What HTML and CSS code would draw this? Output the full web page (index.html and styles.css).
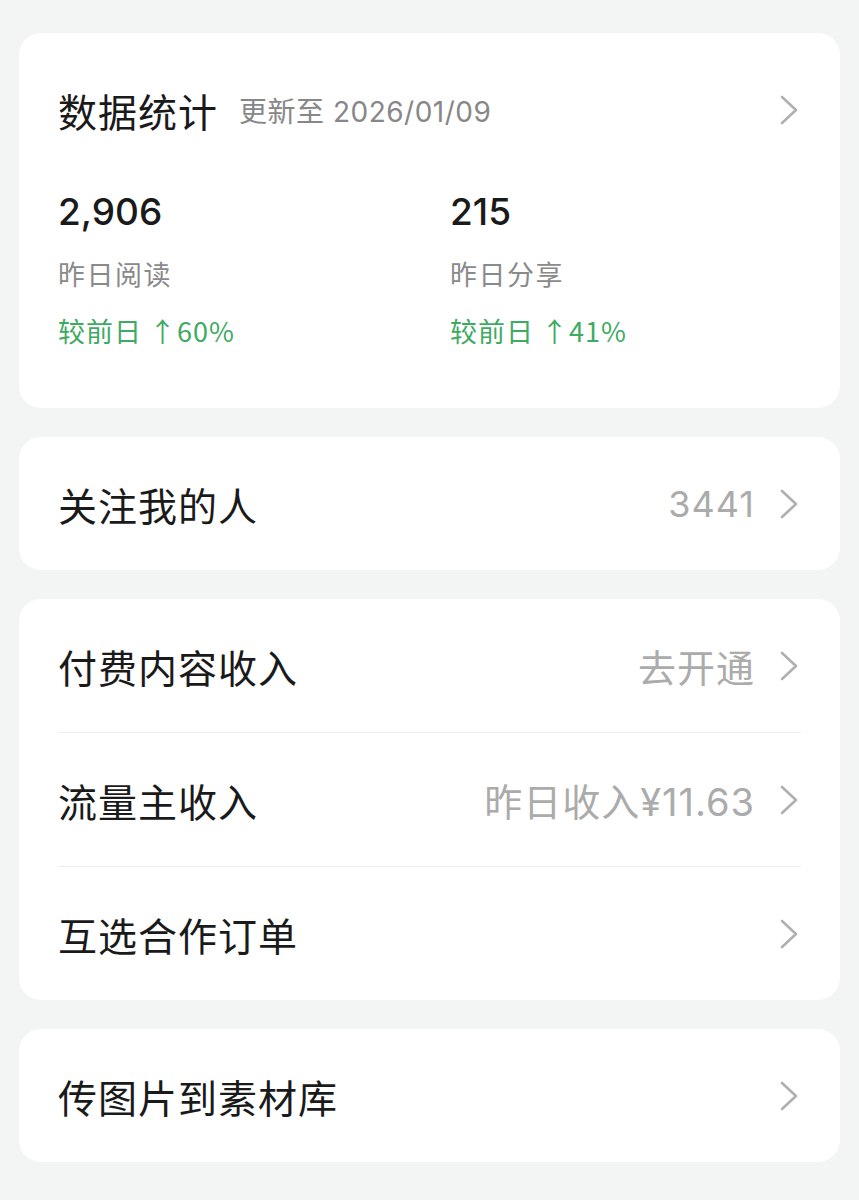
FILE: index.html
```html
<!DOCTYPE html>
<html lang="zh-CN">

<head>
    <meta charset="UTF-8">
    <meta name="viewport" content="width=device-width, initial-scale=1.0">
    <title>创作中心</title>
    <link rel="stylesheet" href="styles.css">
</head>

<body>
    <div class="page">
        <!-- 数据统计 -->
        <div class="card stats-card">
            <div class="stats-header">
                <span class="stats-title">数据统计</span>
                <span class="stats-date">更新至 2026/01/09</span>
                <svg class="chevron" viewBox="0 0 20 32"><path d="M3 3 L17 16 L3 29" /></svg>
            </div>
            <div class="stats-grid">
                <div class="stat">
                    <div class="stat-num">2,906</div>
                    <div class="stat-label">昨日阅读</div>
                    <div class="stat-trend">较前日 ↑60%</div>
                </div>
                <div class="stat">
                    <div class="stat-num">215</div>
                    <div class="stat-label">昨日分享</div>
                    <div class="stat-trend">较前日 ↑41%</div>
                </div>
            </div>
        </div>

        <div class="card">
            <div class="row">
                <span class="row-title">关注我的人</span>
                <span class="row-value num">3441</span>
                <svg class="chevron" viewBox="0 0 20 32"><path d="M3 3 L17 16 L3 29" /></svg>
            </div>
        </div>

        <div class="card">
            <div class="row">
                <span class="row-title">付费内容收入</span>
                <span class="row-value">去开通</span>
                <svg class="chevron" viewBox="0 0 20 32"><path d="M3 3 L17 16 L3 29" /></svg>
            </div>
            <div class="row">
                <span class="row-title">流量主收入</span>
                <span class="row-value">昨日收入¥11.63</span>
                <svg class="chevron" viewBox="0 0 20 32"><path d="M3 3 L17 16 L3 29" /></svg>
            </div>
            <div class="row">
                <span class="row-title">互选合作订单</span>
                <span class="row-value"></span>
                <svg class="chevron" viewBox="0 0 20 32"><path d="M3 3 L17 16 L3 29" /></svg>
            </div>
        </div>

        <div class="card">
            <div class="row">
                <span class="row-title">传图片到素材库</span>
                <span class="row-value"></span>
                <svg class="chevron" viewBox="0 0 20 32"><path d="M3 3 L17 16 L3 29" /></svg>
            </div>
        </div>
    </div>
</body>

</html>
```

FILE: styles.css
```css
body {
    font-family: "Noto Sans CJK SC", "Noto Sans", sans-serif;
    background-color: #f3f5f5;
    margin: 0;
    padding: 0;
    color: #1a1a1a;
}

.page {
    padding: 33px 19px 40px;
    display: flex;
    flex-direction: column;
    gap: 29px;
}

.card {
    background: #fff;
    border-radius: 22px;
    padding: 0 39px;
}

/* stats card */
.stats-card {
    padding-top: 49px;
    padding-bottom: 57px;
}

.stats-header {
    display: flex;
    align-items: center;
    height: 56px;
}

.stats-title {
    font-size: 39px;
    letter-spacing: 1px;
}

.stats-date {
    margin-left: 21px;
    font-family: "Inter", "Noto Sans CJK SC", sans-serif;
    font-size: 28px;
    letter-spacing: 0.5px;
    color: #878787;
    flex: 1;
}

.stats-grid {
    display: grid;
    grid-template-columns: 392px 1fr;
    margin-top: 45px;
}

.stat-num {
    font-family: "Inter", "Noto Sans CJK SC", sans-serif;
    font-size: 37px;
    font-weight: 500;
    line-height: 58px;
}

.stat-label {
    margin-top: 13px;
    font-size: 27px;
    line-height: 40px;
    color: #8a8a8a;
    letter-spacing: 1.5px;
}

.stat-trend {
    margin-top: 17px;
    font-size: 27px;
    line-height: 40px;
    color: #3faa63;
    letter-spacing: 1px;
}

/* list rows */
.row {
    display: flex;
    align-items: center;
    height: 133px;
    border-bottom: 1px solid #ededed;
}

.row:last-child {
    border-bottom: none;
}

.row-title {
    font-size: 39px;
    letter-spacing: 1px;
    flex: 1;
}

.row-value {
    font-family: "Inter", "Noto Sans CJK SC", sans-serif;
    font-size: 38px;
    color: #ababab;
    letter-spacing: 1px;
}

.row-value.num {
    font-size: 36px;
}

.chevron {
    width: 20px;
    height: 32px;
    margin-left: 24px;
    margin-right: 2px;
    fill: none;
    stroke: #b0b0b0;
    stroke-width: 2.6;
    stroke-linecap: round;
    stroke-linejoin: round;
}
```
